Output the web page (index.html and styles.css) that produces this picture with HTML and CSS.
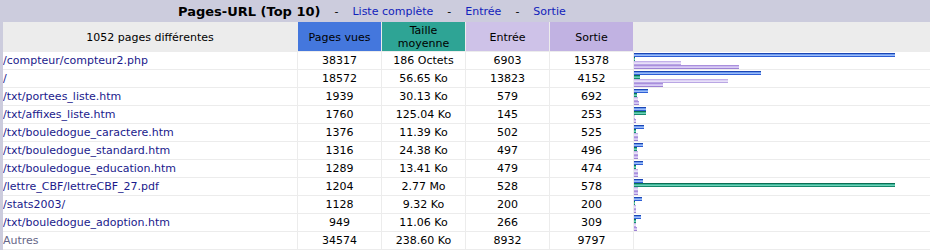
FILE: index.html
```html
<!DOCTYPE html>
<html lang="fr">
<head>
<meta charset="utf-8">
<title>Pages-URL</title>
<link rel="stylesheet" href="styles.css">
</head>
<body>
<div class="aws-border">
  <div class="aws-title"><span class="title-main">Pages-URL (Top 10)</span><span class="sep">-</span><a href="#">Liste complète</a><span class="sep">-</span><a href="#">Entrée</a><span class="sep">-</span><a href="#">Sortie</a></div>
  <table class="aws-data">
    <colgroup>
      <col class="c-url"><col class="c-num"><col class="c-num"><col class="c-num"><col class="c-num"><col class="c-bar">
    </colgroup>
    <thead>
      <tr>
        <th>1052 pages différentes</th>
        <th class="h-p">Pages vues</th>
        <th class="h-k">Taille<br>moyenne</th>
        <th class="h-e">Entrée</th>
        <th class="h-x">Sortie</th>
        <th></th>
      </tr>
    </thead>
    <tbody>
      <tr><td class="url"><a href="#">/compteur/compteur2.php</a></td><td>38317</td><td>186 Octets</td><td>6903</td><td>15378</td>
        <td class="bars"><i class="bar p" style="width:261px"></i><i class="bar k" style="width:1px"></i><i class="bar e" style="width:47px"></i><i class="bar x" style="width:105px"></i></td></tr>
      <tr><td class="url"><a href="#">/</a></td><td>18572</td><td>56.65 Ko</td><td>13823</td><td>4152</td>
        <td class="bars"><i class="bar p" style="width:127px"></i><i class="bar k" style="width:6px"></i><i class="bar e" style="width:94px"></i><i class="bar x" style="width:29px"></i></td></tr>
      <tr><td class="url"><a href="#">/txt/portees_liste.htm</a></td><td>1939</td><td>30.13 Ko</td><td>579</td><td>692</td>
        <td class="bars"><i class="bar p" style="width:14px"></i><i class="bar k" style="width:3px"></i><i class="bar e" style="width:4px"></i><i class="bar x" style="width:5px"></i></td></tr>
      <tr><td class="url"><a href="#">/txt/affixes_liste.htm</a></td><td>1760</td><td>125.04 Ko</td><td>145</td><td>253</td>
        <td class="bars"><i class="bar p" style="width:12px"></i><i class="bar k" style="width:12px"></i><i class="bar e" style="width:1px"></i><i class="bar x" style="width:2px"></i></td></tr>
      <tr><td class="url"><a href="#">/txt/bouledogue_caractere.htm</a></td><td>1376</td><td>11.39 Ko</td><td>502</td><td>525</td>
        <td class="bars"><i class="bar p" style="width:10px"></i><i class="bar k" style="width:2px"></i><i class="bar e" style="width:4px"></i><i class="bar x" style="width:4px"></i></td></tr>
      <tr><td class="url"><a href="#">/txt/bouledogue_standard.htm</a></td><td>1316</td><td>24.38 Ko</td><td>497</td><td>496</td>
        <td class="bars"><i class="bar p" style="width:9px"></i><i class="bar k" style="width:3px"></i><i class="bar e" style="width:4px"></i><i class="bar x" style="width:4px"></i></td></tr>
      <tr><td class="url"><a href="#">/txt/bouledogue_education.htm</a></td><td>1289</td><td>13.41 Ko</td><td>479</td><td>474</td>
        <td class="bars"><i class="bar p" style="width:9px"></i><i class="bar k" style="width:2px"></i><i class="bar e" style="width:4px"></i><i class="bar x" style="width:4px"></i></td></tr>
      <tr><td class="url"><a href="#">/lettre_CBF/lettreCBF_27.pdf</a></td><td>1204</td><td>2.77 Mo</td><td>528</td><td>578</td>
        <td class="bars"><i class="bar p" style="width:9px"></i><i class="bar k" style="width:261px"></i><i class="bar e" style="width:4px"></i><i class="bar x" style="width:4px"></i></td></tr>
      <tr><td class="url"><a href="#">/stats2003/</a></td><td>1128</td><td>9.32 Ko</td><td>200</td><td>200</td>
        <td class="bars"><i class="bar p" style="width:8px"></i><i class="bar k" style="width:1px"></i><i class="bar e" style="width:2px"></i><i class="bar x" style="width:2px"></i></td></tr>
      <tr><td class="url"><a href="#">/txt/bouledogue_adoption.htm</a></td><td>949</td><td>11.06 Ko</td><td>266</td><td>309</td>
        <td class="bars"><i class="bar p" style="width:7px"></i><i class="bar k" style="width:2px"></i><i class="bar e" style="width:2px"></i><i class="bar x" style="width:3px"></i></td></tr>
      <tr><td class="url other">Autres</td><td>34574</td><td>238.60 Ko</td><td>8932</td><td>9797</td><td class="bars"></td></tr>
    </tbody>
  </table>
</div>
</body>
</html>
```

FILE: styles.css
```css
html, body {
  margin: 0;
  padding: 0;
  background: #ffffff;
}

body {
  font-family: "DejaVu Sans", Verdana, sans-serif;
  font-size: 11px;
  color: #000000;
}

.aws-border {
  width: 930px;
  box-sizing: border-box;
  background: #CCCCDD;
  padding: 0 0 1px 3px;
  overflow: hidden;
}

.aws-title {
  height: 22px;
  display: flex;
  align-items: center;
  padding-left: 175px;
  font-size: 11px;
  white-space: nowrap;
}

.title-main {
  font-size: 13px;
  font-weight: bold;
}

.aws-title .sep {
  margin: 0 14px;
}

.aws-title a {
  color: #1122BB;
  text-decoration: none;
}

.aws-data {
  width: 927px;
  table-layout: fixed;
  border-collapse: separate;
  border-spacing: 0;
  background: #ffffff;
}

.c-url { width: 295px; }
.c-num { width: 84px; }
.c-bar { width: 296px; }

.aws-data th,
.aws-data td {
  border-right: 1px solid #ECECEC;
  border-bottom: 1px solid #ECECEC;
  padding: 0 2px;
  text-align: center;
  overflow: hidden;
  white-space: nowrap;
  box-sizing: border-box;
}

.aws-data th {
  background: #ECECEC;
  font-weight: normal;
  line-height: 13px;
  padding-top: 1px;
  height: 30px;
}

.aws-data th:last-child {
  border-right: none;
}

.aws-data .h-p { background: #4477DD; }
.aws-data .h-k { background: #2EA495; }
.aws-data .h-e { background: #CEC2E8; }
.aws-data .h-x { background: #C1B2E2; }

.aws-data td {
  line-height: 16px;
  padding-top: 1px;
  padding-bottom: 0;
  height: 18px;
}

.aws-data td.url {
  text-align: left;
  padding-left: 0;
}

.aws-data td.url a {
  color: #1A1A8C;
  text-decoration: none;
}

.aws-data td.other {
  color: #666688;
}

.aws-data td.bars {
  text-align: left;
  padding: 1px 0 0 0;
  line-height: 0;
  vertical-align: top;
  border-right: none;
}

.bar {
  display: block;
  height: 4px;
}

.bar.p {
  background: linear-gradient(to bottom, #1c46b4 0 1px, #6e9cf0 1px 2px, #9dbcf6 2px 3px, #2e5fd6 3px 4px);
}

.bar.k {
  background: linear-gradient(to bottom, #0c6e54 0 1px, #3cb89a 1px 2px, #6fd0b8 2px 3px, #16896c 3px 4px);
}

.bar.e {
  background: linear-gradient(to bottom, #c2b0ea 0 1px, #ddd2f5 1px 2px, #e8e0f8 2px 3px, #b9a6e4 3px 4px);
}

.bar.x {
  background: linear-gradient(to bottom, #a98fdc 0 1px, #cdbdf0 1px 2px, #d9cdf4 2px 3px, #9d82d4 3px 4px);
}
```
